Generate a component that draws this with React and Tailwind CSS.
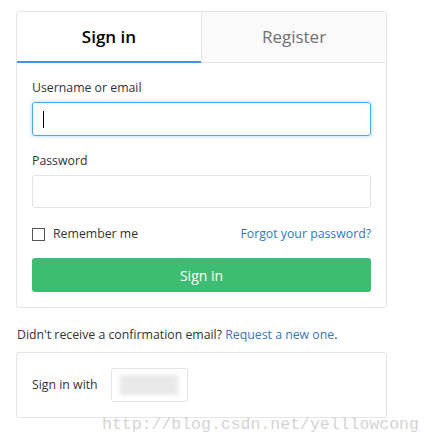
import { useState } from "react";

const font = { fontFamily: '"Open Sans", "Noto Sans", sans-serif' };

export default function App() {
  const [remember, setRemember] = useState(false);

  return (
    <div className="relative h-[443px] w-[433px] bg-white text-[12.3px] text-[#333]" style={font}>
      <div className="pl-4 pt-[11px] w-[387px]">
        {/* Login card */}
        <div className="rounded-[3px] border border-[#e5e5e5] overflow-hidden">
          <div className="flex h-[51px]">
            <div className="flex-1 flex items-center justify-center border-b-2 border-[#4a8fe3] text-[17px] font-semibold text-black">
              Sign in
            </div>
            <div className="flex-1 flex items-center justify-center bg-[#fafafa] border-l border-b border-[#e5e5e5] text-[17px] text-[#707070]">
              Register
            </div>
          </div>

          <div className="px-[15px] pt-[16px] pb-[15px]">
            <label className="block leading-[18px]">Username or email</label>
            <div className="mt-[5px] h-[34px] rounded-[3px] border border-[#4aa8ec] shadow-[0_0_4px_rgba(74,168,236,0.5)] flex items-center pl-[10px]">
              <span className="block h-[17px] w-px bg-black" />
            </div>

            <label className="block leading-[18px] mt-[16px]">Password</label>
            <div className="mt-[5px] h-[33px] rounded-[3px] border border-[#e3e3e3]" />

            <div className="mt-[19px] flex items-center justify-between leading-[14px]">
              <label className="flex items-center gap-[8px] cursor-pointer" onClick={() => setRemember(!remember)}>
                <span className="block h-[13px] w-[13px] border border-[#555] bg-white">
                  {remember && <span className="block h-full w-full bg-[#4a8fe3]" />}
                </span>
                Remember me
              </label>
              <a className="text-[#3777bc]">Forgot your password?</a>
            </div>

            <button className="mt-[17px] h-[34px] w-full rounded-[3px] bg-[#3dbd71] text-white text-[14px]">
              Sign in
            </button>
          </div>
        </div>

        <p className="mt-[18px] pl-px leading-[18px]">
          Didn't receive a confirmation email? <a className="text-[#3777bc]">Request a new one</a>.
        </p>

        {/* Omniauth card */}
        <div className="mt-[8px] h-[66px] rounded-[3px] border border-[#e5e5e5] flex items-center px-[15px]">
          <span>Sign in with</span>
          <div className="ml-[13px] h-[34px] w-[77px] rounded-[3px] border border-[#e3e3e3] flex items-center justify-center">
            <div className="h-[20px] w-[58px] bg-[#e8e8e8] blur-[2px]" />
          </div>
        </div>
      </div>

      {/* watermark */}
      <div
        className="absolute left-[102px] top-[413px] text-[16.5px] text-[#d4d4d4]"
        style={{ fontFamily: '"Liberation Mono", monospace' }}
      >
        http://blog.csdn.net/yelllowcong
      </div>
    </div>
  );
}
